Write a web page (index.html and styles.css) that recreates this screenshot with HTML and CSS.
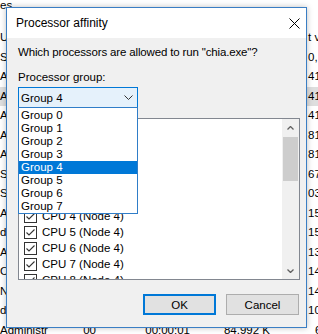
FILE: index.html
```html
<!DOCTYPE html>
<html lang="en">
<head>
  <meta charset="UTF-8" />
  <title>Processor affinity</title>
  <link rel="stylesheet" href="styles.css">
</head>
<body>

  <!-- task manager details view behind the dialog -->
  <div class="details">
    <div class="details-head"><span class="c-user">es</span></div>
    <div class="row"><span class="c-user">UMFD-0</span><span class="c-commit">t v</span></div>
    <div class="row"><span class="c-user">SYSTEM</span><span class="c-commit">0,</span></div>
    <div class="row"><span class="c-user">Administr</span><span class="c-commit">41,236 K</span></div>
    <div class="row selected"><span class="c-user">Administr</span><span class="c-commit">41,232 K</span></div>
    <div class="row"><span class="c-user">Administr</span><span class="c-commit">41,240 K</span></div>
    <div class="row"><span class="c-user">Administr</span><span class="c-commit">81,604 K</span></div>
    <div class="row"><span class="c-user">Administr</span><span class="c-commit">81,596 K</span></div>
    <div class="row"><span class="c-user">SYSTEM</span><span class="c-commit">67,112 K</span></div>
    <div class="row"><span class="c-user">SYSTEM</span><span class="c-commit">03,448 K</span></div>
    <div class="row"><span class="c-user">Administr</span><span class="c-commit">15,220 K</span></div>
    <div class="row"><span class="c-user">dat</span><span class="c-commit">15,204 K</span></div>
    <div class="row"><span class="c-user">Administr</span><span class="c-commit">13,916 K</span></div>
    <div class="row"><span class="c-user">OWNER</span><span class="c-commit">14,080 K</span></div>
    <div class="row"><span class="c-user">NETWORK</span><span class="c-commit">14,072 K</span></div>
    <div class="row"><span class="c-user">dat</span><span class="c-commit">10,568 K</span></div>
    <div class="row">
      <span class="c-user">Administr</span>
      <span class="c-cpu">00</span>
      <span class="c-time">00:00:01</span>
      <span class="c-mem">84,992 K</span>
      <span class="c-commit short">6,148 K</span>
    </div>
  </div>

  <div class="dialog">
    <div class="titlebar">
      <span class="title">Processor affinity</span>
      <svg class="close" width="11" height="11" viewBox="0 0 11 11">
        <path d="M0.5 0.5 L10.5 10.5 M10.5 0.5 L0.5 10.5" />
      </svg>
    </div>

    <div class="dialog-body">
      <p class="prompt">Which processors are allowed to run "chia.exe"?</p>
      <p class="label">Processor group:</p>

      <div class="combo-wrap">
        <div class="combo">
          <span>Group 4</span>
          <svg class="chevron" width="9" height="5" viewBox="0 0 9 5">
            <path d="M0.5 0.5 L4.5 4.5 L8.5 0.5" />
          </svg>
        </div>
        <ul class="combo-list">
          <li>Group 0</li>
          <li>Group 1</li>
          <li>Group 2</li>
          <li>Group 3</li>
          <li class="active">Group 4</li>
          <li>Group 5</li>
          <li>Group 6</li>
          <li>Group 7</li>
        </ul>
      </div>

      <div class="cpu-list">
        <div class="cpu-items">
          <label class="cpu"><span class="box"></span>&lt;All Processors&gt;</label>
          <label class="cpu"><span class="box checked"></span>CPU 0 (Node 4)</label>
          <label class="cpu"><span class="box checked"></span>CPU 1 (Node 4)</label>
          <label class="cpu"><span class="box checked"></span>CPU 2 (Node 4)</label>
          <label class="cpu"><span class="box checked"></span>CPU 3 (Node 4)</label>
          <label class="cpu"><span class="box checked"></span>CPU 4 (Node 4)</label>
          <label class="cpu"><span class="box checked"></span>CPU 5 (Node 4)</label>
          <label class="cpu"><span class="box checked"></span>CPU 6 (Node 4)</label>
          <label class="cpu"><span class="box checked"></span>CPU 7 (Node 4)</label>
          <label class="cpu"><span class="box checked"></span>CPU 8 (Node 4)</label>
        </div>
        <div class="vscroll">
          <div class="arrow">
            <svg width="7" height="4" viewBox="0 0 7 4"><path d="M0.5 3.5 L3.5 0.5 L6.5 3.5" /></svg>
          </div>
          <div class="track"><div class="thumb"></div></div>
          <div class="arrow">
            <svg width="7" height="4" viewBox="0 0 7 4"><path d="M0.5 0.5 L3.5 3.5 L6.5 0.5" /></svg>
          </div>
        </div>
      </div>

      <div class="buttons">
        <button class="btn default">OK</button>
        <button class="btn">Cancel</button>
      </div>
    </div>
  </div>

</body>
</html>
```

FILE: styles.css
```css
body {
  margin: 0;
  width: 318px;
  height: 334px;
  overflow: hidden;
  background: #ffffff;
  font-family: 'Liberation Sans', Arial, sans-serif;
  font-size: 11.5px;
  color: #000;
  position: relative;
}

/* background task manager */
.details-head {
  height: 28px;
  line-height: 10px;
}

.row {
  display: grid;
  grid-template-columns: 70px 30px 100px 78px 80px;
  height: 19.5px;
  line-height: 19.5px;
  white-space: nowrap;
}

.row.selected {
  background: #dedede;
}

.c-user { grid-column: 1; overflow: hidden; }
.c-cpu { grid-column: 2; text-align: right; padding-right: 4px; }
.c-time { grid-column: 3; text-align: right; padding-right: 10px; }
.c-mem { grid-column: 4; text-align: right; padding-right: 8px; }
.c-commit { grid-column: 5; padding-left: 30px; }
.c-commit.short { padding-left: 37px; }

/* dialog */
.dialog {
  position: absolute;
  left: 6px;
  top: 7px;
  width: 301px;
  height: 321px;
  box-sizing: border-box;
  border: 1px solid #3a7ec4;
  background: #f0f0f0;
  box-shadow: 0 0 6px rgba(0,0,0,0.25);
  display: flex;
  flex-direction: column;
}

.titlebar {
  height: 30px;
  background: #ffffff;
  display: flex;
  align-items: center;
  justify-content: space-between;
  padding: 0 6px 0 9px;
  flex-shrink: 0;
  font-size: 12px;
}

.close path {
  stroke: #000;
  stroke-width: 1;
  fill: none;
}

.dialog-body {
  padding: 7px 6px 0 11px;
  display: flex;
  flex-direction: column;
}

.prompt,
.label {
  margin: 0;
  line-height: 15px;
}

.prompt {
  letter-spacing: -0.15px;
}

.label {
  margin-top: 10px;
}

.combo-wrap {
  position: relative;
  width: 120px;
  margin-top: 2px;
  z-index: 2;
}

.combo {
  height: 21px;
  box-sizing: border-box;
  border: 1px solid #0078d7;
  background: #e5f1fb;
  display: flex;
  align-items: center;
  justify-content: space-between;
  padding: 0 4px 0 2px;
}

.chevron path {
  stroke: #333;
  stroke-width: 1;
  fill: none;
}

.combo-list {
  position: absolute;
  top: 20px;
  left: 0;
  width: 120px;
  box-sizing: border-box;
  margin: 0;
  padding: 1px 0 0;
  list-style: none;
  background: #fff;
  border: 1px solid #2f7dc8;
}

.combo-list li {
  height: 13px;
  line-height: 13px;
  padding-left: 2px;
}

.combo-list li.active {
  background: #0078d7;
  color: #fff;
}

.cpu-list {
  margin-top: 10px;
  height: 162px;
  box-sizing: border-box;
  border: 1px solid #828790;
  background: #fff;
  display: flex;
  overflow: hidden;
}

.cpu-items {
  flex: 1;
  padding: 9px 0 0 5px;
}

.cpu {
  display: flex;
  align-items: center;
  height: 16px;
  gap: 5px;
  white-space: nowrap;
}

.box {
  width: 13px;
  height: 13px;
  box-sizing: border-box;
  border: 1px solid #333;
  background: #fff;
}

.box.checked {
  background: #fff url("data:image/svg+xml,%3Csvg xmlns='http://www.w3.org/2000/svg' width='11' height='11'%3E%3Cpath d='M1.5 5.5 L4 8 L9.5 2.5' stroke='%23333' stroke-width='1.1' fill='none'/%3E%3C/svg%3E") no-repeat center;
}

.vscroll {
  width: 17px;
  background: #f0f0f0;
  display: flex;
  flex-direction: column;
}

.arrow {
  height: 17px;
  display: flex;
  align-items: center;
  justify-content: center;
}

.arrow path {
  stroke: #606060;
  stroke-width: 1.3;
  fill: none;
}

.track {
  flex: 1;
  padding: 1px 1px 0;
}

.thumb {
  height: 44px;
  background: #cdcdcd;
}

.buttons {
  display: flex;
  justify-content: flex-end;
  gap: 10px;
  margin-top: 14px;
  margin-right: 1px;
}

.btn {
  width: 73px;
  height: 21px;
  box-sizing: border-box;
  border: 1px solid #adadad;
  background: #e1e1e1;
  font-family: inherit;
  font-size: 11.5px;
  padding: 0;
  color: #000;
}

.btn.default {
  border: 2px solid #0078d7;
}
```
